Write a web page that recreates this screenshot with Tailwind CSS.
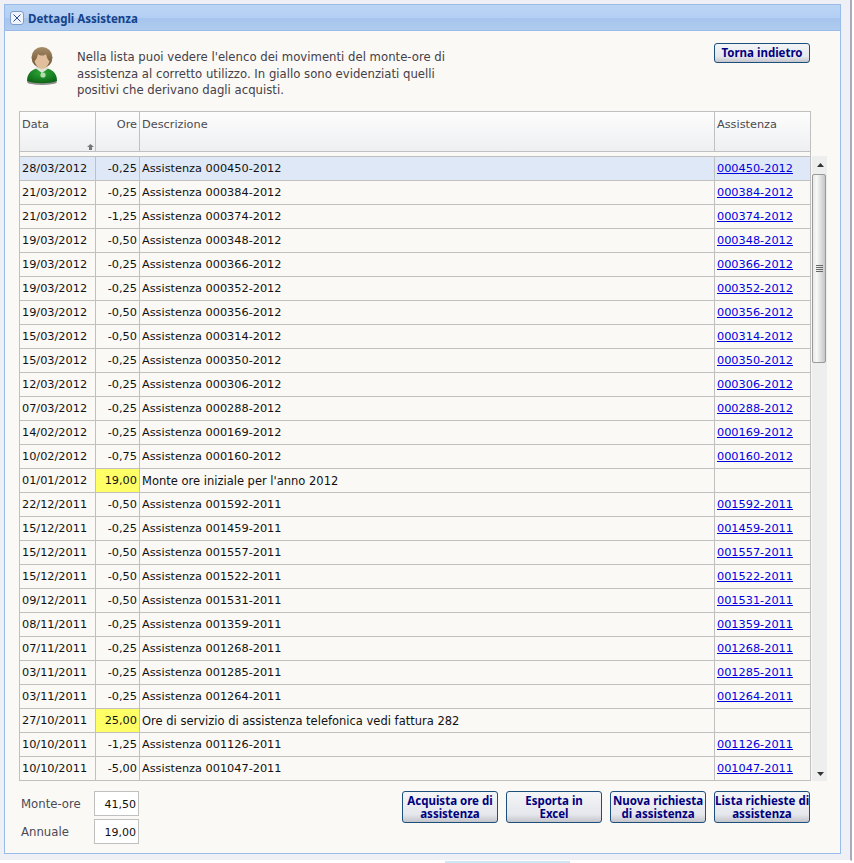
<!DOCTYPE html>
<html lang="en">
<head>
<meta charset="UTF-8">
<title>Dettagli Assistenza</title>
<script src="https://cdn.jsdelivr.net/npm/@tailwindcss/browser@4"></script>
</head>
<body class="bg-white font-['DejaVu_Sans',sans-serif] text-[11.3px] overflow-hidden">
<div class="w-[852px] h-[861px] pt-[4px] pl-[4px] bg-[#eef0f5] border-r-2 border-b border-r-[#a9a9c0] border-b-white">
  <div class="w-[837px] h-[850px] border border-[#99bbe8] bg-[#faf9f5] flex flex-col">
    <div class="h-[26px] shrink-0 flex items-center gap-[4px] pl-[5px] border-b border-[#99bbe8] bg-[linear-gradient(#bcd5f5_0%,#b3cff3_50%,#a6c4ec_52%,#afcbf0_100%)]">
      <div class="w-[14px] h-[14px] rounded-[3px] border border-[#7f9ccb] bg-[#eef3fc] flex items-center justify-center">
        <svg width="8" height="8" viewBox="0 0 8 8"><path d="M0.5 0.5L7.5 7.5M7.5 0.5L0.5 7.5" stroke="#2c4f96" stroke-width="1" fill="none"/></svg>
      </div>
      <span class="font-['Noto_Sans',sans-serif] font-bold text-[#15428b] text-[11.5px] pt-[2px]">Dettagli Assistenza</span>
    </div>

    <div class="h-[80px] shrink-0 flex pl-[19px] pr-[30px]">
      <svg class="mt-[15px] w-[36px] h-[40px]" viewBox="0 0 36 40">
        <defs>
          <linearGradient id="hair" x1="0" y1="0" x2="0" y2="1"><stop offset="0" stop-color="#a58b66"/><stop offset="1" stop-color="#6b4f31"/></linearGradient>
          <radialGradient id="shirt" cx=".5" cy=".3" r=".8"><stop offset="0" stop-color="#2aa836"/><stop offset="1" stop-color="#0a5a12"/></radialGradient>
        </defs>
        <ellipse cx="18" cy="36" rx="15" ry="3" fill="#444" opacity=".6"/>
        <path d="M3 35c0-9 6-13 15-13s15 4 15 13c-8 3-22 3-30 0z" fill="url(#shirt)"/>
        <path d="M11 22l7 5 7-5-3-2h-8z" fill="#dfe3d6"/>
        <circle cx="19" cy="29" r="2.6" fill="#b5dcae"/>
        <circle cx="18" cy="11.5" r="10.5" fill="url(#hair)"/>
        <path d="M10.5 15c2-1 3-5 3.5-7 2 2 6 2 8 0 .5 2 1.5 6 3.500 7-1 4-4 8-7.500 8s-6.500-4-7.500-8z" fill="#e2bf9c"/>
      </svg>
      <p class="ml-[17px] mt-[18px] w-[376px] text-[11.7px] leading-[16.5px] text-[#45404a]">Nella lista puoi vedere l'elenco dei movimenti del monte-ore di assistenza al corretto utilizzo. In giallo sono evidenziati quelli positivi che derivano dagli acquisti.</p>
      <button class="ml-auto mt-[12px] w-[96px] h-[20px] rounded-[3px] border border-[#1d4f7c] bg-[linear-gradient(#f4f5f7_0%,#e6e7ec_70%,#c4c5cb_100%)] text-[#00007f] font-['Noto_Sans',sans-serif] font-bold text-[11.5px]">Torna indietro</button>
    </div>

    <div class="flex ml-[14px]">
      <div class="w-[792px]">
        <div class="flex h-[41px] border border-[#c0c0c0] bg-[linear-gradient(#fdfdfd,#eeeff1)] text-[#4a4a50]">
          <div class="w-[76px] px-[2px] pt-[5px] border-r border-[#c0c0c0] relative">Data
            <svg class="absolute right-[1px] bottom-[1px]" width="7" height="6" viewBox="0 0 7 6"><path d="M3.500 0L7 3H5V6H2V3H0z" fill="#777"/></svg>
          </div>
          <div class="w-[44px] px-[2px] pt-[5px] border-r border-[#c0c0c0] text-right">Ore</div>
          <div class="w-[575px] px-[2px] pt-[5px] border-r border-[#c0c0c0]">Descrizione</div>
          <div class="flex-1 px-[2px] pt-[5px]">Assistenza</div>
        </div>
        <div class="h-[5px] border-x border-b border-[#c0c0c0]"></div>
        <div id="rows" class="text-[#111]"></div>
      </div>
      <div class="ml-[1px] mt-[45px] w-[15px] h-[625px] bg-[#eeeeee] flex flex-col">
        <svg class="mt-[7px] ml-[5px]" width="7" height="4" viewBox="0 0 7 4"><path d="M3.500 0L7 4H0z" fill="#333"/></svg>
        <div class="mt-[7px] w-[14px] h-[189px] rounded-[2px] border border-[#999] bg-[linear-gradient(90deg,#e8e8e8,#f8f8f8_30%,#c6c6c6)] flex flex-col items-center justify-center gap-[1px]">
          <i class="block w-[7px] h-[1px] bg-[#666]"></i><i class="block w-[7px] h-[1px] bg-[#666]"></i><i class="block w-[7px] h-[1px] bg-[#666]"></i><i class="block w-[7px] h-[1px] bg-[#666]"></i>
        </div>
        <svg class="mt-auto mb-[5px] ml-[5px]" width="7" height="4" viewBox="0 0 7 4"><path d="M0 0H7L3.500 4z" fill="#333"/></svg>
      </div>
    </div>

    <div class="flex ml-[14px] mt-[10px]">
      <div class="w-[120px] flex flex-col gap-[4px] text-[#4a4a55]">
        <div class="flex items-center pl-[2px] h-[24px]"><span class="w-[74px] text-[11.7px] pt-[3px]">Monte-ore</span><div class="w-[45px] h-[25px] border border-[#c0c0c0] bg-white text-right pr-[2px] text-[11px] leading-[25px] text-[#111]">41,50</div></div>
        <div class="flex items-center pl-[2px] h-[24px]"><span class="w-[74px] text-[11.7px] pt-[3px]">Annuale</span><div class="w-[45px] h-[25px] border border-[#c0c0c0] bg-white text-right pr-[2px] text-[11px] leading-[25px] text-[#111]">19,00</div></div>
      </div>
      <div class="ml-[263px] flex gap-[8px] h-[32px]">
        <button class="w-[96px] whitespace-nowrap rounded-[3px] border border-[#1d4f7c] bg-[linear-gradient(#f4f5f7_0%,#e6e7ec_75%,#c4c5cb_100%)] text-[#00007f] font-['Noto_Sans',sans-serif] font-bold text-[11.5px] leading-[13px]">Acquista ore di<br>assistenza</button>
        <button class="w-[96px] whitespace-nowrap rounded-[3px] border border-[#1d4f7c] bg-[linear-gradient(#f4f5f7_0%,#e6e7ec_75%,#c4c5cb_100%)] text-[#00007f] font-['Noto_Sans',sans-serif] font-bold text-[11.5px] leading-[13px]">Esporta in<br>Excel</button>
        <button class="w-[96px] whitespace-nowrap rounded-[3px] border border-[#1d4f7c] bg-[linear-gradient(#f4f5f7_0%,#e6e7ec_75%,#c4c5cb_100%)] text-[#00007f] font-['Noto_Sans',sans-serif] font-bold text-[11.5px] leading-[13px]">Nuova richiesta<br>di assistenza</button>
        <button class="w-[96px] whitespace-nowrap rounded-[3px] border border-[#1d4f7c] bg-[linear-gradient(#f4f5f7_0%,#e6e7ec_75%,#c4c5cb_100%)] text-[#00007f] font-['Noto_Sans',sans-serif] font-bold text-[11.5px] leading-[13px]">Lista richieste di<br>assistenza</button>
      </div>
    </div>
  </div>
</div>
<div class="ml-[445px] w-[125px] h-[2px] bg-[#cde6f8]"></div>
<script>
  var data = [
    ['28/03/2012','-0,25','000450-2012'],['21/03/2012','-0,25','000384-2012'],['21/03/2012','-1,25','000374-2012'],
    ['19/03/2012','-0,50','000348-2012'],['19/03/2012','-0,25','000366-2012'],['19/03/2012','-0,25','000352-2012'],
    ['19/03/2012','-0,50','000356-2012'],['15/03/2012','-0,50','000314-2012'],['15/03/2012','-0,25','000350-2012'],
    ['12/03/2012','-0,25','000306-2012'],['07/03/2012','-0,25','000288-2012'],['14/02/2012','-0,25','000169-2012'],
    ['10/02/2012','-0,75','000160-2012'],['01/01/2012','19,00','',"Monte ore iniziale per l'anno 2012"],
    ['22/12/2011','-0,50','001592-2011'],['15/12/2011','-0,25','001459-2011'],['15/12/2011','-0,50','001557-2011'],
    ['15/12/2011','-0,50','001522-2011'],['09/12/2011','-0,50','001531-2011'],['08/11/2011','-0,25','001359-2011'],
    ['07/11/2011','-0,25','001268-2011'],['03/11/2011','-0,25','001285-2011'],['03/11/2011','-0,25','001264-2011'],
    ['27/10/2011','25,00','','Ore di servizio di assistenza telefonica vedi fattura 282'],
    ['10/10/2011','-1,25','001126-2011'],['10/10/2011','-5,00','001047-2011']
  ];
  var html = '';
  data.forEach(function (r, i) {
    var desc = r[3] || 'Assistenza ' + r[2];
    var rowBg = i == 0 ? 'bg-[#dfe8f6]' : '';
    var oreBg = r[3] ? 'bg-[#ffff66]' : '';
    var descSize = r[3] ? 'text-[11.5px]' : '';
    var link = r[2] ? '<a href="#" class="underline text-[#0000e0]">' + r[2] + '</a>' : '';
    html += '<div class="flex h-[24px] leading-[24px] border-x border-b border-[#c0c0c0] ' + rowBg + '">'
      + '<div class="w-[76px] px-[2px] border-r border-[#c0c0c0]">' + r[0] + '</div>'
      + '<div class="w-[44px] px-[2px] border-r border-[#c0c0c0] text-right ' + oreBg + '">' + r[1] + '</div>'
      + '<div class="w-[575px] px-[2px] border-r border-[#c0c0c0] ' + descSize + '">' + desc + '</div>'
      + '<div class="flex-1 px-[2px]">' + link + '</div>'
      + '</div>';
  });
  document.getElementById('rows').innerHTML = html;
</script>
</body>
</html>
